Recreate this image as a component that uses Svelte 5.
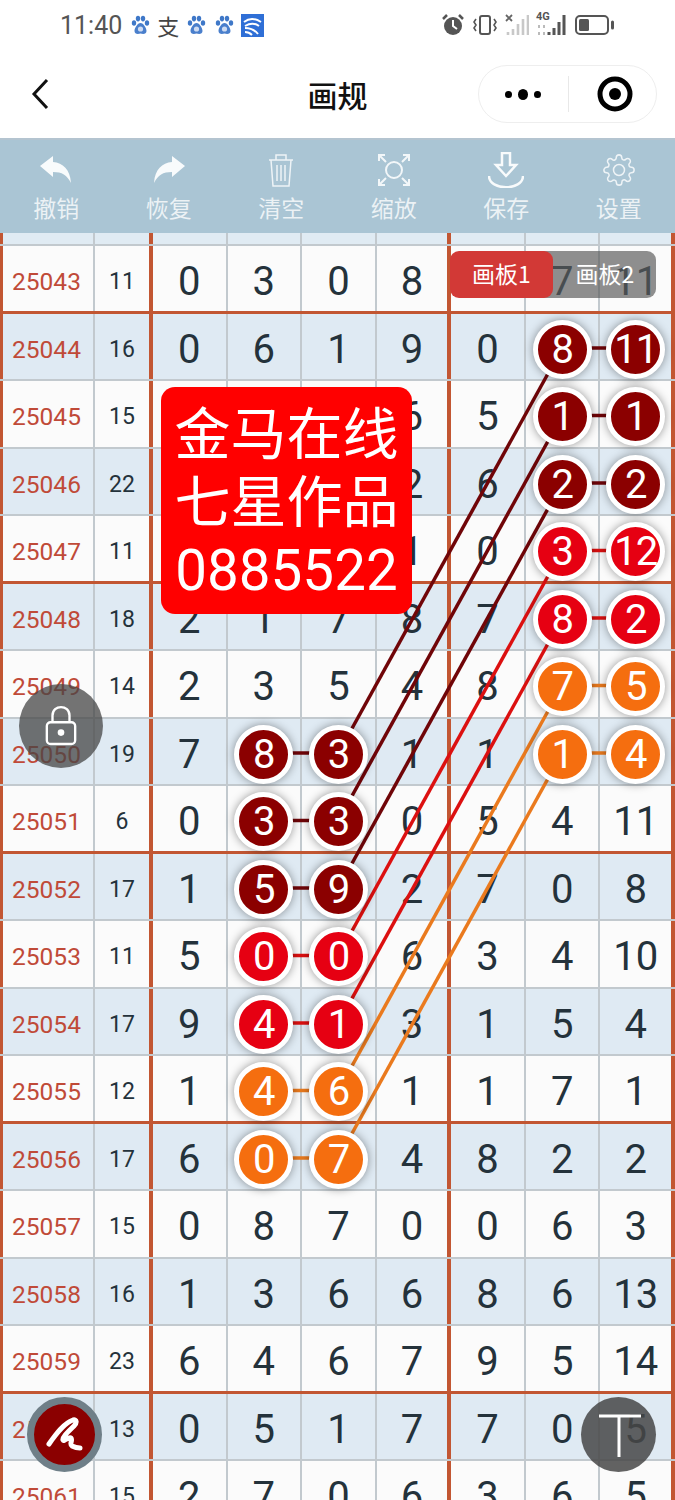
<script>
  // [id, count, seven cells]; a letter after the value marks a ball: d dark, r red, o orange
  const rows = [
    ["25043", 11, ["0", "3", "0", "8", "4", "7", "11"]],
    ["25044", 16, ["0", "6", "1", "9", "0", "8d", "11d"]],
    ["25045", 15, ["3", "2", "4", "6", "5", "1d", "1d"]],
    ["25046", 22, ["1", "5", "0", "2", "6", "2d", "2d"]],
    ["25047", 11, ["4", "2", "9", "1", "0", "3r", "12r"]],
    ["25048", 18, ["2", "1", "7", "8", "7", "8r", "2r"]],
    ["25049", 14, ["2", "3", "5", "4", "8", "7o", "5o"]],
    ["25050", 19, ["7", "8d", "3d", "1", "1", "1o", "4o"]],
    ["25051", 6, ["0", "3d", "3d", "0", "5", "4", "11"]],
    ["25052", 17, ["1", "5d", "9d", "2", "7", "0", "8"]],
    ["25053", 11, ["5", "0r", "0r", "6", "3", "4", "10"]],
    ["25054", 17, ["9", "4r", "1r", "3", "1", "5", "4"]],
    ["25055", 12, ["1", "4o", "6o", "1", "1", "7", "1"]],
    ["25056", 17, ["6", "0o", "7o", "4", "8", "2", "2"]],
    ["25057", 15, ["0", "8", "7", "0", "0", "6", "3"]],
    ["25058", 16, ["1", "3", "6", "6", "8", "6", "13"]],
    ["25059", 23, ["6", "4", "6", "7", "9", "5", "14"]],
    ["25060", 13, ["0", "5", "1", "7", "7", "0", "5"]],
    ["25061", 15, ["2", "7", "0", "6", "3", "6", "5"]],
  ];

  const tools = ["撤销", "恢复", "清空", "缩放", "保存", "设置"];
  const lineColors = { d: "#700508", r: "#dc1010", o: "#ea7a1e" };

  const colX = (c) => 153 + 74.57 * (c + 0.5) - 1;
  const rowY = (r) => 13.75 + 67.5 * (r + 0.5);

  const isBall = (v) => /[dro]$/.test(v);
  const mark = (v) => v.slice(-1);
  const value = (v) => (isBall(v) ? v.slice(0, -1) : v);

  // every ball pair in the right block runs down to the matching pair six rows lower
  const links = [1, 2, 3, 4, 5, 6, 7].map((r) => ({
    x1: colX(5),
    y1: rowY(r),
    x2: colX(2),
    y2: rowY(r + 6),
    color: lineColors[mark(rows[r][2][5])],
  }));

  const bars = [];
  rows.forEach((row, r) => {
    for (let c = 0; c < 6; c++) {
      if (isBall(row[2][c]) && isBall(row[2][c + 1])) {
        bars.push({ x1: colX(c), x2: colX(c + 1), y: rowY(r), color: lineColors[mark(row[2][c])] });
      }
    }
  });
</script>

{#snippet paw()}
  <svg class="paw" viewBox="0 0 20 20" width="22" height="20">
    <ellipse cx="4" cy="8" rx="2.2" ry="2.8" fill="#3f78c8" />
    <ellipse cx="8" cy="3.6" rx="2.2" ry="2.8" fill="#3f78c8" />
    <ellipse cx="13" cy="3.6" rx="2.2" ry="2.8" fill="#3f78c8" />
    <ellipse cx="17" cy="8" rx="2.2" ry="2.8" fill="#3f78c8" />
    <path d="M10.5 8c-3 0-6 5-6 8 0 3 3 3.500 6 2.500 3 1 6 .5 6-2.500 0-3-3-8-6-8z" fill="#4a7fcc" />
    <circle cx="10.500" cy="14" r="2.600" fill="#cfdcf2" />
  </svg>
{/snippet}

<div class="page">
  <div class="status">
    <div class="status-left">
      <span class="time">11:40</span>
      {@render paw()}
      <span class="glyph">支</span>
      {@render paw()}
      {@render paw()}
      <svg class="app-icon" viewBox="0 0 23 23" width="23" height="23">
        <rect width="23" height="23" fill="#2f6fd6" />
        <path d="M3 8c5-4 11-4 17 0M4 12c5-3 10-3 14 0M4 14c4 0 9 1 13 6M4 18c3 0 5 1 7 3" fill="none" stroke="#fff" stroke-width="2" />
      </svg>
    </div>
    <div class="status-right">
      <svg viewBox="0 0 24 24" width="24" height="24">
        <circle cx="12" cy="13" r="9" fill="#555" />
        <path d="M12 7v6l4 3" fill="none" stroke="#fff" stroke-width="2" />
        <path d="M2 6l4-4M22 6l-4-4" stroke="#555" stroke-width="2.500" />
      </svg>
      <svg viewBox="0 0 26 24" width="26" height="24">
        <rect x="8" y="3" width="10" height="18" rx="2" fill="none" stroke="#555" stroke-width="2" />
        <path d="M4 6l-2 3 2 3-2 3 2 3M22 6l2 3-2 3 2 3-2 3" fill="none" stroke="#555" stroke-width="1.600" />
      </svg>
      <svg viewBox="0 0 24 24" width="24" height="24">
        <path d="M1 2l6 6M7 2l-6 6" stroke="#666" stroke-width="1.800" />
        <path d="M3 22v-3M8 22v-6M13 22V11M18 22V6M23 22V2" stroke="#c8c8c8" stroke-width="2.600" />
      </svg>
      <div class="net">
        <span class="net-label">4G</span>
        <svg viewBox="0 0 28 24" width="32" height="24">
          <path d="M1 22v-3M1 15v-3M6 22v-3M6 15v-3" stroke="#bbb" stroke-width="2" />
          <path d="M11 22v-3M16 22v-7M21 22V9M26 22V2" stroke="#555" stroke-width="3" />
        </svg>
      </div>
      <svg viewBox="0 0 40 24" width="40" height="24">
        <rect x="1" y="3" width="32" height="18" rx="4" fill="none" stroke="#555" stroke-width="2" />
        <rect x="4" y="6" width="10" height="12" rx="1.500" fill="#555" />
        <rect x="36" y="7.500" width="3" height="9" rx="1.500" fill="#555" />
      </svg>
    </div>
  </div>

  <div class="nav">
    <svg class="back" viewBox="0 0 18 32" width="18" height="32">
      <path d="M16 2L3 16l13 14" fill="none" stroke="#111" stroke-width="3" />
    </svg>
    <span class="title">画规</span>
    <div class="capsule">
      <div class="dots"><i></i><b></b><i></i></div>
      <span class="divider"></span>
      <svg viewBox="0 0 36 36" width="36" height="36">
        <circle cx="18" cy="18" r="15" fill="none" stroke="#000" stroke-width="5" />
        <circle cx="18" cy="18" r="6" fill="#000" />
      </svg>
    </div>
  </div>

  <div class="toolbar">
    {#each tools as label, i}
      <div class="tool">
        <svg viewBox="0 0 36 36" width="36" height="36">
          {#if i === 0}
            <path d="M2 14L15 4v6c10 1 17 7 18 21-4-8-9-11-18-11v5z" fill="#fff" fill-opacity=".92" />
          {:else if i === 1}
            <path d="M34 14L21 4v6C11 11 4 17 3 31c4-8 9-11 18-11v5z" fill="#fff" fill-opacity=".92" />
          {:else if i === 2}
            <path d="M6 8h24M13 8V3h10v5M8 8l2 26h16l2-26M14 13v16M18 13v16M22 13v16" fill="none" stroke="#fff" stroke-opacity=".8" stroke-width="1.500" />
          {:else if i === 3}
            <circle cx="18" cy="18" r="8" fill="none" stroke="#fff" stroke-opacity=".85" stroke-width="2" />
            <path d="M3 9V3h6M3 3l7 7M33 9V3h-6M33 3l-7 7M3 27v6h6M3 33l7-7M33 27v6h-6M33 33l-7-7" fill="none" stroke="#fff" stroke-opacity=".85" stroke-width="2" />
          {:else if i === 4}
            <path d="M14 1h8v12h6L18 24 8 13h6zM1 24c0 15 34 15 34 0" fill="none" stroke="#fff" stroke-opacity=".92" stroke-width="2.500" />
          {:else}
            <g transform="translate(1.500 1.500) scale(1.375)" fill="none" stroke="#fff" stroke-opacity=".8" stroke-width="1.100">
              <circle cx="12" cy="12" r="4" />
              <path d="M19.4 15a1.65 1.65 0 0 0 .33 1.82l.06.06a2 2 0 0 1 0 2.83 2 2 0 0 1-2.83 0l-.06-.06a1.65 1.65 0 0 0-1.82-.33 1.65 1.65 0 0 0-1 1.51V21a2 2 0 0 1-2 2 2 2 0 0 1-2-2v-.09A1.65 1.65 0 0 0 9 19.4a1.65 1.65 0 0 0-1.82.33l-.06.06a2 2 0 0 1-2.83 0 2 2 0 0 1 0-2.83l.06-.06a1.65 1.65 0 0 0 .33-1.82 1.65 1.65 0 0 0-1.51-1H3a2 2 0 0 1-2-2 2 2 0 0 1 2-2h.09A1.65 1.65 0 0 0 4.6 9a1.65 1.65 0 0 0-.33-1.82l-.06-.06a2 2 0 0 1 0-2.83 2 2 0 0 1 2.83 0l.06.06a1.65 1.65 0 0 0 1.82.33H9a1.65 1.65 0 0 0 1-1.51V3a2 2 0 0 1 2-2 2 2 0 0 1 2 2v.09a1.65 1.65 0 0 0 1 1.51 1.65 1.65 0 0 0 1.82-.33l.06-.06a2 2 0 0 1 2.83 0 2 2 0 0 1 0 2.83l-.06.06a1.65 1.65 0 0 0-.33 1.82V9a1.65 1.65 0 0 0 1.51 1H21a2 2 0 0 1 2 2 2 2 0 0 1-2 2h-.09a1.65 1.65 0 0 0-1.51 1z" />
            </g>
          {/if}
        </svg>
        <span>{label}</span>
      </div>
    {/each}
  </div>

  <div class="board">
    <div class="row stub">
      <div class="cell"></div>
      <div class="cell thick"></div>
      {#each Array(7) as _, c}
        <div class="cell" class:thick={c === 3 || c === 6}></div>
      {/each}
    </div>

    {#each rows as row, r}
      <div class="row" class:blue={r % 2 === 1} class:group-end={r % 4 === 0}>
        <div class="cell issue">{row[0]}</div>
        <div class="cell thick count">{row[1]}</div>
        {#each row[2] as v, c}
          <div class="cell num" class:thick={c === 3 || c === 6}>
            {#if isBall(v)}
              <span class="ball {mark(v)}">{value(v)}</span>
            {:else}
              {v}
            {/if}
          </div>
        {/each}
      </div>
    {/each}

    <svg class="links" viewBox="0 0 675 1267" width="675" height="1267">
      {#each links as l}
        <line x1={l.x1} y1={l.y1} x2={l.x2} y2={l.y2} stroke={l.color} stroke-width="3.500" />
      {/each}
      {#each bars as b}
        <line x1={b.x1} y1={b.y} x2={b.x2} y2={b.y} stroke={b.color} stroke-width="3.500" />
      {/each}
    </svg>

    <div class="tabs">
      <span class="tab-gray">画板2</span>
      <span class="tab-red">画板1</span>
    </div>

    <div class="promo">
      <div>金马在线</div>
      <div>七星作品</div>
      <div class="promo-num">0885522</div>
    </div>

    <div class="lock">
      <svg viewBox="0 0 36 44" width="34" height="42">
        <path d="M9 18V11c0-12 18-12 18 0v7" fill="none" stroke="#fff" stroke-width="2.500" />
        <rect x="3" y="18" width="30" height="23" rx="4" fill="none" stroke="#fff" stroke-width="2.500" />
        <circle cx="18" cy="29" r="3.500" fill="#fff" />
      </svg>
    </div>

    <div class="brush">
      <svg viewBox="0 0 38 36" width="38" height="36">
        <path d="M3 27C10 17 18 6 27 3c4-1 4 3 1 6-5 5-12 11-11 14 1 2 6-4 8-2 2 2-2 6 1 8 2 1 5 2 8 2" fill="none" stroke="#fff" stroke-width="5" stroke-linecap="round" stroke-linejoin="round" />
      </svg>
    </div>

    <div class="text-btn">
      <svg viewBox="0 0 44 44" width="44" height="44">
        <path d="M2 3h42M22 3v41" fill="none" stroke="#fff" stroke-width="3" />
      </svg>
    </div>
  </div>
</div>

<style>
  :global(body) {
    margin: 0;
    background: #fff;
  }

  .page {
    width: 675px;
    height: 1500px;
    overflow: hidden;
    font-family: Roboto, "Noto Sans CJK SC", sans-serif;
  }

  /* status bar */
  .status {
    height: 50px;
    display: flex;
    align-items: center;
    justify-content: space-between;
    padding: 0 60px;
    box-sizing: border-box;
  }

  .status-left,
  .status-right {
    display: flex;
    align-items: center;
  }

  .status-left {
    gap: 6px;
  }

  .status-right {
    gap: 7px;
  }

  .time {
    font-size: 25px;
    color: #555;
    margin-right: 1px;
  }

  .glyph {
    width: 22px;
    text-align: center;
    font-size: 22px;
    line-height: 24px;
    color: #444;
    font-family: "Noto Sans CJK SC", sans-serif;
  }

  .net {
    position: relative;
    height: 24px;
  }

  .net-label {
    position: absolute;
    left: 0;
    top: -3px;
    font-size: 11px;
    font-weight: 700;
    color: #555;
  }

  /* nav */
  .nav {
    height: 88px;
    display: flex;
    align-items: center;
    position: relative;
    padding: 0 18px 0 31px;
  }

  .back {
    margin-bottom: 1px;
  }

  .title {
    position: absolute;
    left: 0;
    right: 0;
    top: 22px;
    text-align: center;
    font-size: 30px;
    font-weight: 500;
    color: #111;
    font-family: "Noto Sans CJK SC", sans-serif;
  }

  .capsule {
    margin-left: auto;
    width: 179px;
    height: 58px;
    box-sizing: border-box;
    border: 1px solid #eee;
    border-radius: 29px;
    display: flex;
    align-items: center;
    padding-left: 26px;
  }

  .dots {
    display: flex;
    align-items: center;
    gap: 6px;
    width: 36px;
  }

  .dots i {
    width: 7px;
    height: 7px;
    border-radius: 50%;
    background: #000;
  }

  .dots b {
    width: 11px;
    height: 11px;
    border-radius: 50%;
    background: #000;
  }

  .divider {
    width: 1px;
    height: 36px;
    background: #e8e8e8;
    margin: 0 28px 0 27px;
  }

  /* toolbar */
  .toolbar {
    height: 95px;
    box-sizing: border-box;
    background: #aac5d4;
    border-top: 2px solid #b4c4d0;
    display: grid;
    grid-template-columns: repeat(6, 1fr);
    padding-top: 12px;
  }

  .tool {
    display: flex;
    flex-direction: column;
    align-items: center;
    gap: 3px;
    color: rgba(255, 255, 255, 0.78);
    font-size: 23px;
    line-height: 32px;
    font-family: "Noto Sans CJK SC", sans-serif;
  }

  /* board */
  .board {
    position: relative;
    height: 1267px;
  }

  .row {
    display: grid;
    grid-template-columns: 95px 58px repeat(7, 1fr);
    height: 67.5px;
    box-sizing: border-box;
    background: #fbfbfb;
    border-bottom: 2px solid #c2c9ce;
  }

  .row.stub {
    height: 13px;
    background: #e0ebf3;
  }

  .row.blue {
    background: #dfeaf3;
  }

  .row.group-end {
    border-bottom: 3px solid #c25632;
  }

  .cell {
    display: flex;
    align-items: center;
    justify-content: center;
    box-sizing: border-box;
    border-right: 2px solid #c2c9ce;
    min-width: 0;
    padding-top: 6px;
  }

  .cell:first-child {
    border-left: 3px solid #c25632;
  }

  .cell.thick {
    border-right: 4px solid #c25632;
  }

  .issue {
    font-size: 24.500px;
    color: #c04a38;
    padding-right: 3px;
  }

  .count {
    font-size: 23px;
    color: #24323b;
  }

  .num {
    font-size: 40px;
    color: #24323b;
  }

  .ball {
    position: relative;
    z-index: 2;
    flex: none;
    width: 59px;
    height: 59px;
    box-sizing: border-box;
    border: 5.500px solid #fff;
    border-radius: 50%;
    display: flex;
    align-items: center;
    justify-content: center;
    color: #fff;
    box-shadow: 0 0 10px rgba(0, 0, 0, 0.4);
    letter-spacing: -1px;
  }

  .ball.d {
    background: #8b0000;
  }

  .ball.r {
    background: #e60012;
  }

  .ball.o {
    background: #f56e0f;
  }

  .links {
    position: absolute;
    left: 0;
    top: 0;
    z-index: 1;
    pointer-events: none;
  }

  /* things floating over the board */
  .tabs {
    position: absolute;
    z-index: 3;
    left: 450px;
    top: 18px;
    width: 206px;
    height: 47px;
    font-size: 23px;
    color: #fff;
    font-family: "Noto Sans CJK SC", sans-serif;
  }

  .tab-red,
  .tab-gray {
    position: absolute;
    top: 0;
    height: 47px;
    display: flex;
    align-items: center;
    justify-content: center;
    border-radius: 9px;
    padding-bottom: 3px;
    box-sizing: border-box;
  }

  .tab-red {
    left: 0;
    width: 103px;
    background: #d23936;
  }

  .tab-gray {
    right: 0;
    width: 126px;
    padding-left: 24px;
    background: rgba(90, 90, 90, 0.68);
  }

  .promo {
    position: absolute;
    z-index: 3;
    left: 161px;
    top: 154px;
    width: 251px;
    height: 227px;
    box-sizing: border-box;
    padding-top: 9px;
    background: #ff0000;
    border-radius: 14px;
    color: #fff;
    text-align: center;
    font-size: 56px;
    line-height: 68px;
    font-family: "Noto Sans CJK SC", sans-serif;
  }

  .promo-num {
    font-family: Roboto, sans-serif;
    font-size: 56.500px;
    padding-top: 5px;
  }

  .lock,
  .brush,
  .text-btn {
    position: absolute;
    z-index: 3;
    border-radius: 50%;
    display: flex;
    align-items: center;
    justify-content: center;
  }

  .lock {
    left: 19px;
    top: 451px;
    width: 84px;
    height: 84px;
    background: rgba(70, 70, 70, 0.75);
  }

  .brush {
    left: 27px;
    top: 1164px;
    width: 75px;
    height: 75px;
    box-sizing: border-box;
    border: 7px solid #6f7f88;
    background: #8b0000;
  }

  .text-btn {
    left: 581px;
    top: 1164px;
    width: 75px;
    height: 75px;
    background: rgba(70, 70, 70, 0.85);
  }
</style>
